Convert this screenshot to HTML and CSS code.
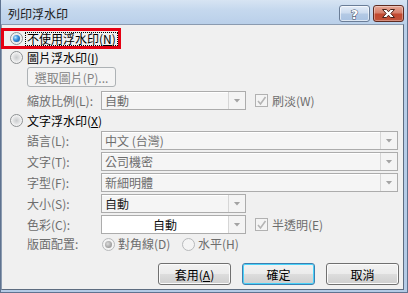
FILE: index.html
```html
<!DOCTYPE html>
<html lang="zh-Hant">
<head>
    <meta charset="UTF-8">
    <meta name="viewport" content="width=device-width, initial-scale=1.0">
    <title>列印浮水印</title>
    <link rel="stylesheet" href="styles.css">
</head>
<body>

<div class="window">
    <div class="titlebar">
        <span class="title">列印浮水印</span>
        <div class="caption-buttons">
            <div class="cap-btn help">
                <svg width="29" height="15" viewBox="0 0 29 15">
                    <text x="14.5" y="13" text-anchor="middle" class="cap-glyph">?</text>
                </svg>
            </div>
            <div class="cap-btn close">
                <svg width="29" height="15" viewBox="0 0 29 15">
                    <path d="M8.5 3.5 H12.5 L14.5 5.8 L16.5 3.5 H20.5 L16.8 7.5 L20.5 11.5 H16.5 L14.5 9.2 L12.5 11.5 H8.5 L12.2 7.5 Z" fill="#fff" stroke="#4b2219" stroke-width="1" stroke-linejoin="round"/>
                </svg>
            </div>
        </div>
    </div>

    <div class="client">
        <div class="option highlight">
            <span class="radio checked"></span>
            <span class="focus">不使用浮水印(<u>N</u>)</span>
        </div>
        <div class="option">
            <span class="radio"></span>
            <span>圖片浮水印(<u>I</u>)</span>
        </div>
        <div class="picture-row">
            <button class="btn disabled picture-btn" type="button">選取圖片(P)...</button>
        </div>
        <div class="field scale-row">
            <span class="field-label">縮放比例(L):</span>
            <div class="combo short">
                <span class="combo-value">自動</span>
                <span class="combo-drop"></span>
            </div>
            <span class="check">
                <span class="check-box">
                    <svg width="11" height="11" viewBox="0 0 11 11"><polyline points="2,6 4.5,9 9.5,2" fill="none" stroke="#b4b4b4" stroke-width="1.6"/></svg>
                </span>
                刷淡(W)
            </span>
        </div>
        <div class="option text-option">
            <span class="radio"></span>
            <span>文字浮水印(<u>X</u>)</span>
        </div>

        <div class="field-list">
            <div class="field">
                <span class="field-label">語言(L):</span>
                <div class="combo full">
                    <span class="combo-value">中文 (台灣)</span>
                    <span class="combo-drop"></span>
                </div>
            </div>
            <div class="field">
                <span class="field-label">文字(T):</span>
                <div class="combo full">
                    <span class="combo-value">公司機密</span>
                    <span class="combo-drop"></span>
                </div>
            </div>
            <div class="field">
                <span class="field-label">字型(F):</span>
                <div class="combo full">
                    <span class="combo-value">新細明體</span>
                    <span class="combo-drop"></span>
                </div>
            </div>
            <div class="field">
                <span class="field-label">大小(S):</span>
                <div class="combo short">
                    <span class="combo-value dark">自動</span>
                    <span class="combo-drop"></span>
                </div>
            </div>
            <div class="field">
                <span class="field-label">色彩(C):</span>
                <div class="combo short color">
                    <span class="combo-value centered"><span class="color-text">自動</span></span>
                    <span class="combo-drop"></span>
                </div>
                <span class="check">
                    <span class="check-box">
                        <svg width="11" height="11" viewBox="0 0 11 11"><polyline points="2,6 4.5,9 9.5,2" fill="none" stroke="#b4b4b4" stroke-width="1.6"/></svg>
                    </span>
                    半透明(E)
                </span>
            </div>
        </div>

        <div class="field layout-row">
            <span class="field-label">版面配置:</span>
            <span class="layout-choice diagonal">
                <span class="radio disabled checked"></span>
                對角線(D)
            </span>
            <span class="layout-choice">
                <span class="radio disabled"></span>
                水平(H)
            </span>
        </div>

        <div class="actions">
            <button class="btn" type="button">套用(<u>A</u>)</button>
            <button class="btn default" type="button">確定</button>
            <button class="btn" type="button">取消</button>
        </div>
    </div>
</div>

</body>
</html>
```

FILE: styles.css
```css
body {
    margin: 0;
    font-family: "Noto Sans CJK TC", "Liberation Sans", sans-serif;
    font-size: 12px;
    color: #000;
    background: #fff;
}

.window {
    width: 408px;
    height: 293px;
    box-sizing: border-box;
    display: flex;
    flex-direction: column;
    padding: 0 3px 2px 0;
    border: 1px solid #5f7390;
    border-top: none;
    background: linear-gradient(#d7e4f3 0, #c5d8ee 10px, #b9cfe9 25px, #b4cbe6 100%);
}

/* Title bar */
.titlebar {
    height: 24px;
    display: flex;
    align-items: flex-start;
    padding-left: 7px;
}

.title {
    margin-top: 6px;
    line-height: 16px;
    color: #1b1b1b;
}

.caption-buttons {
    margin-left: auto;
    margin-top: 5px;
    display: flex;
    gap: 3px;
}

.cap-btn {
    width: 31px;
    height: 17px;
    box-sizing: border-box;
    border: 1px solid #6a7d97;
    border-radius: 3px;
    display: flex;
    align-items: center;
    justify-content: center;
}

.cap-btn.help {
    background: linear-gradient(#e4edf8 0, #cddcef 45%, #b3c9e4 55%, #a9c2e2 100%);
    box-shadow: inset 0 0 0 1px rgba(255, 255, 255, 0.6);
}

.cap-btn.close {
    border-color: #5e2b22;
    background: linear-gradient(#e6a898 0, #d6806c 45%, #c2482f 55%, #c1533a 100%);
    box-shadow: inset 0 0 0 1px rgba(255, 255, 255, 0.35);
}

.cap-glyph {
    font-family: "DejaVu Sans", sans-serif;
    font-size: 13px;
    font-weight: bold;
    fill: #fff;
    stroke: #3b4a5e;
    stroke-width: 1px;
    paint-order: stroke;
}

/* Dialog body */
.client {
    flex: 1;
    display: flex;
    flex-direction: column;
    padding-top: 3px;
    background: #f0f0f0;
    border: 1px solid #5d6c80;
    border-top-color: #8b9bb0;
    border-left-color: #8b9bb0;
}

.option {
    height: 17px;
    display: flex;
    align-items: center;
    gap: 4px;
    padding-left: 8px;
    line-height: 14px;
}

.option.highlight {
    align-self: flex-start;
    height: 21px;
    box-sizing: border-box;
    margin-left: -1px;
    padding-left: 6px;
    gap: 2px;
    border: 3px solid #e50012;
}

.focus {
    border: 1px dotted #000;
    padding: 0 1px;
    line-height: 12px;
}

.option.text-option {
    height: 21px;
}

u {
    text-decoration: underline;
    text-underline-offset: 1px;
}

/* Radios and checkboxes */
.radio {
    position: relative;
    flex: none;
    width: 13px;
    height: 13px;
    box-sizing: border-box;
    border-radius: 50%;
    border: 1px solid #8d9092;
    background: radial-gradient(circle at 50% 50%, #c9cbcd 0, #e4e5e6 45%, #f6f6f6 70%);
}

.radio.checked::after {
    content: "";
    position: absolute;
    left: 2px;
    top: 2px;
    width: 7px;
    height: 7px;
    border-radius: 50%;
    background: radial-gradient(circle at 35% 35%, #bfe8ff 0, #3b94de 40%, #0e4a95 100%);
}

.radio.disabled {
    border-color: #b7b9bb;
    background: #f4f4f4;
}

.radio.disabled.checked::after {
    background: radial-gradient(circle at 40% 40%, #dcdcdc 0, #a4a4a4 60%, #8c8c8c 100%);
}

.check {
    display: flex;
    align-items: center;
    gap: 4px;
    margin-left: 9px;
    color: #6d6d6d;
    line-height: 14px;
}

.check-box {
    width: 13px;
    height: 13px;
    box-sizing: border-box;
    border: 1px solid #b1b1b1;
    background: #f4f4f4;
    display: flex;
    align-items: center;
    justify-content: center;
}

/* Buttons */
.btn {
    width: 73px;
    height: 22px;
    padding: 0;
    font-family: inherit;
    font-size: 12px;
    color: #000;
    border: 1px solid #707070;
    border-radius: 3px;
    background: linear-gradient(#f2f2f2 0, #ebebeb 50%, #dddddd 50%, #cfcfcf 100%);
    box-shadow: inset 0 0 0 1px #fbfbfb;
}

.btn.default {
    border-color: #3c7fb1;
    box-shadow: inset 0 0 0 1px #4ad2f9;
}

.btn.disabled {
    color: #838383;
    border-color: #adb2b5;
    background: #f4f4f4;
    box-shadow: none;
}

.picture-row {
    margin-top: 1px;
    padding-left: 25px;
}

.picture-btn {
    width: 89px;
    height: 20px;
    display: block;
}

/* Label + combo rows */
.field {
    height: 19px;
    display: flex;
    align-items: center;
    padding-left: 25px;
    line-height: 14px;
}

.scale-row {
    margin-top: 4px;
}

.field-list {
    display: flex;
    flex-direction: column;
    gap: 2px;
}

.field-label {
    width: 74px;
    flex: none;
    color: #6d6d6d;
}

.combo {
    height: 19px;
    box-sizing: border-box;
    display: flex;
    border: 1px solid #acacac;
    background: #f5f5f5;
    box-shadow: inset 0 1px 0 #fff;
}

.combo.short {
    width: 145px;
}

.combo.full {
    width: 297px;
}

.combo.color {
    background: #fff;
}

.combo-value {
    flex: 1;
    padding-left: 3px;
    line-height: 17px;
    color: #6d6d6d;
}

.combo-value.dark {
    color: #222;
}

.combo-value.centered {
    text-align: center;
    padding-left: 0;
    color: #111;
}

.combo-drop {
    width: 17px;
    box-sizing: border-box;
    border-left: 1px solid #d6d6d6;
    background: #f4f4f4;
    display: flex;
    align-items: center;
    justify-content: center;
}

.combo-drop::after {
    content: "";
    width: 7px;
    height: 4px;
    background: #a3a3a3;
    clip-path: polygon(0 0, 100% 0, 50% 100%);
}

.layout-row {
    height: 20px;
}

.layout-choice {
    display: flex;
    align-items: center;
    gap: 3px;
    color: #6d6d6d;
}

.layout-choice.diagonal {
    width: 80px;
    margin-left: 1px;
}

.actions {
    margin-top: 9px;
    display: flex;
    justify-content: flex-end;
    gap: 11px;
    padding-right: 4px;
}
```
